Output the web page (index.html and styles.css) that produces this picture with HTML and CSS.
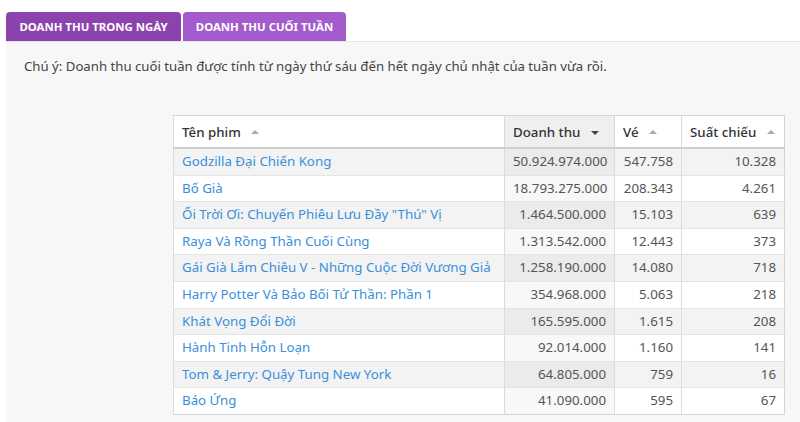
FILE: index.html
```
<!DOCTYPE html>
<html lang="vi">
<head>
<meta charset="utf-8">
<title>Doanh thu</title>
<link rel="stylesheet" href="styles.css">
</head>
<body>
<div class="tabs">
  <div class="tab tab-day">DOANH THU TRONG NGÀY</div>
  <div class="tab tab-week">DOANH THU CUỐI TUẦN</div>
</div>
<div class="panel">
  <p class="note">Chú ý: Doanh thu cuối tuần được tính từ ngày thứ sáu đến hết ngày chủ nhật của tuần vừa rồi.</p>
  <div class="table-wrap">
    <table class="grid">
      <colgroup>
        <col class="c-name"><col class="c-rev"><col class="c-tix"><col class="c-show">
      </colgroup>
      <thead>
        <tr>
          <th class="left">Tên phim <span class="arrow up"></span></th>
          <th class="left sorted">Doanh thu <span class="arrow down"></span></th>
          <th class="left">Vé <span class="arrow up"></span></th>
          <th class="left">Suất chiếu <span class="arrow up"></span></th>
        </tr>
      </thead>
      <tbody>
        <tr><td><a>Godzilla Đại Chiến Kong</a></td><td class="num s">50.924.974.000</td><td class="num">547.758</td><td class="num">10.328</td></tr>
        <tr><td><a>Bố Già</a></td><td class="num s">18.793.275.000</td><td class="num">208.343</td><td class="num">4.261</td></tr>
        <tr><td><a>Ối Trời Ơi: Chuyến Phiêu Lưu Đầy "Thú" Vị</a></td><td class="num s">1.464.500.000</td><td class="num">15.103</td><td class="num">639</td></tr>
        <tr><td><a>Raya Và Rồng Thần Cuối Cùng</a></td><td class="num s">1.313.542.000</td><td class="num">12.443</td><td class="num">373</td></tr>
        <tr><td><a>Gái Già Lắm Chiêu V - Những Cuộc Đời Vương Giả</a></td><td class="num s">1.258.190.000</td><td class="num">14.080</td><td class="num">718</td></tr>
        <tr><td><a>Harry Potter Và Bảo Bối Tử Thần: Phần 1</a></td><td class="num s">354.968.000</td><td class="num">5.063</td><td class="num">218</td></tr>
        <tr><td><a>Khát Vọng Đổi Đời</a></td><td class="num s">165.595.000</td><td class="num">1.615</td><td class="num">208</td></tr>
        <tr><td><a>Hành Tinh Hỗn Loạn</a></td><td class="num s">92.014.000</td><td class="num">1.160</td><td class="num">141</td></tr>
        <tr><td><a>Tom &amp; Jerry: Quậy Tung New York</a></td><td class="num s">64.805.000</td><td class="num">759</td><td class="num">16</td></tr>
        <tr><td><a>Báo Ứng</a></td><td class="num s">41.090.000</td><td class="num">595</td><td class="num">67</td></tr>
      </tbody>
    </table>
  </div>
</div>
</body>
</html>
```
FILE: styles.css
```
html, body {
  margin: 0;
  padding: 0;
  background: #ffffff;
  height: 100%;
}
body {
  font-family: "Noto Sans", "Open Sans", sans-serif;
  color: #444;
  padding: 12px 0 0 6px;
  box-sizing: border-box;
  display: flex;
  flex-direction: column;
  overflow: hidden;
}
.tabs {
  display: flex;
  gap: 2px;
  height: 29px;
}
.tab {
  color: #fff;
  font-weight: 700;
  font-size: 11.4px;
  line-height: 29px;
  border-radius: 4px 4px 0 0;
  text-align: center;
}
.tab-day {
  width: 175px;
  background: #8d43ae;
}
.tab-week {
  width: 163px;
  background: #a45bcb;
}
.panel {
  flex: 1;
  background: #f7f7f7;
  border-top: 1px solid #e6e6e6;
  padding: 13px 0 0 18px;
}
.note {
  margin: 0;
  font-size: 13.2px;
  line-height: 22px;
  color: #444;
}
.table-wrap {
  margin-top: 38px;
  padding-left: 149px;
}
.grid {
  border-collapse: collapse;
  table-layout: fixed;
  width: 611px;
  background: #fff;
  border: 1px solid #d4d4d4;
  font-size: 13.3px;
}
.c-name { width: 331px; }
.c-rev { width: 110px; }
.c-tix { width: 67px; }
.c-show { width: 103px; }
.grid th {
  font-weight: 500;
  color: #333;
  text-align: left;
  padding: 7px 8px 6px 8px;
  line-height: 18px;
  border-left: 1px solid #d9d9d9;
  border-bottom: 2px solid #cfcfcf;
  background: #fff;
  white-space: nowrap;
}
.grid th.sorted {
  background: #efefef;
}
.arrow {
  display: inline-block;
  width: 0;
  height: 0;
  margin-left: 7px;
  vertical-align: 3px;
  border-left: 4px solid transparent;
  border-right: 4px solid transparent;
}
.arrow.up {
  border-bottom: 4px solid #a8a8a8;
}
.arrow.down {
  border-top: 4px solid #444;
  vertical-align: 2px;
}
.grid td {
  padding: 4px 8px 4px 8px;
  line-height: 17.6px;
  height: 17.6px;
  border-left: 1px solid #dcdcdc;
  border-top: 1px solid #e4e4e4;
  color: #555;
  white-space: nowrap;
  overflow: hidden;
}
.grid tbody tr:nth-child(odd) td {
  background: #f3f3f3;
}
.grid tbody tr:nth-child(odd) td.s {
  background: #ebebeb;
}
.grid tbody tr:nth-child(even) td.s {
  background: #f8f8f8;
}
.grid td.num {
  text-align: right;
}
.grid a {
  color: #3a8fdb;
  text-decoration: none;
}
```
